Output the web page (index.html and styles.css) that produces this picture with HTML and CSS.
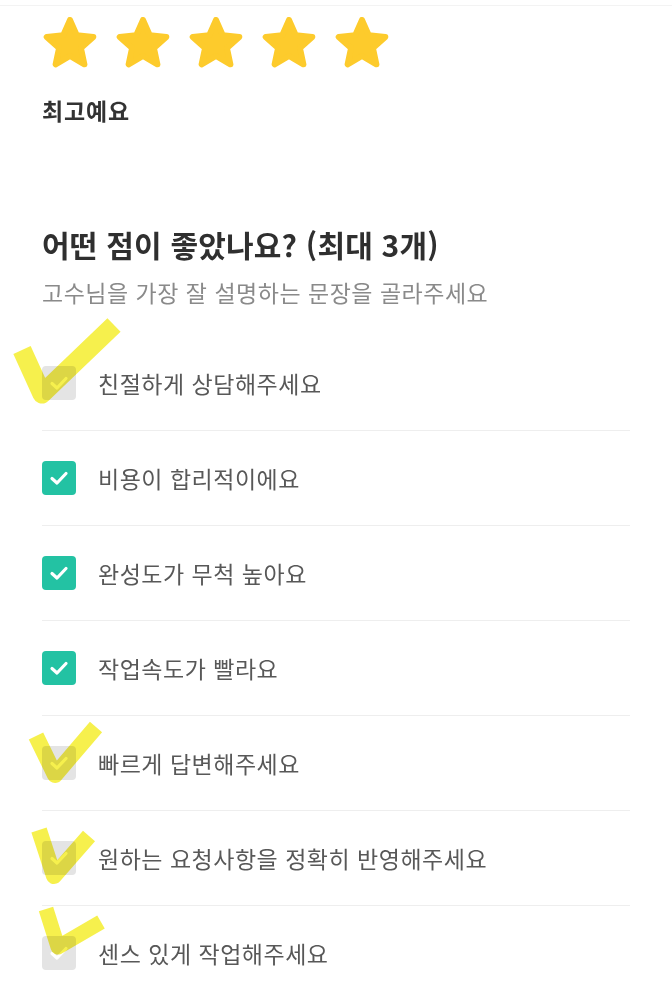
FILE: index.html
```html
<!DOCTYPE html>
<html lang="ko">
<head>
<meta charset="utf-8">
<link rel="stylesheet" href="styles.css">
</head>
<body>
<div class="page">
  <div class="stars">
    <svg class="star" viewBox="0 0 54 51"><path d="M27 3 L33.76 18.2 L50.3 19.93 L37.94 31.05 L41.4 47.32 L27 39 L12.6 47.32 L16.06 31.05 L3.7 19.93 L20.24 18.2 Z"/></svg>
    <svg class="star" viewBox="0 0 54 51"><path d="M27 3 L33.76 18.2 L50.3 19.93 L37.94 31.05 L41.4 47.32 L27 39 L12.6 47.32 L16.06 31.05 L3.7 19.93 L20.24 18.2 Z"/></svg>
    <svg class="star" viewBox="0 0 54 51"><path d="M27 3 L33.76 18.2 L50.3 19.93 L37.94 31.05 L41.4 47.32 L27 39 L12.6 47.32 L16.06 31.05 L3.7 19.93 L20.24 18.2 Z"/></svg>
    <svg class="star" viewBox="0 0 54 51"><path d="M27 3 L33.76 18.2 L50.3 19.93 L37.94 31.05 L41.4 47.32 L27 39 L12.6 47.32 L16.06 31.05 L3.7 19.93 L20.24 18.2 Z"/></svg>
    <svg class="star" viewBox="0 0 54 51"><path d="M27 3 L33.76 18.2 L50.3 19.93 L37.94 31.05 L41.4 47.32 L27 39 L12.6 47.32 L16.06 31.05 L3.7 19.93 L20.24 18.2 Z"/></svg>
  </div>
  <div class="rating-label">최고예요</div>

  <h2 class="title">어떤 점이 좋았나요? (최대 3개)</h2>
  <p class="subtitle">고수님을 가장 잘 설명하는 문장을 골라주세요</p>

  <ul class="options">
    <li class="option"><span class="box"><svg viewBox="0 0 34 34"><path d="M10 17.5 L15 22 L24 12.5"/></svg></span><span class="label">친절하게 상담해주세요</span></li>
    <li class="option"><span class="box on"><svg viewBox="0 0 34 34"><path d="M10 17.5 L15 22 L24 12.5"/></svg></span><span class="label">비용이 합리적이에요</span></li>
    <li class="option"><span class="box on"><svg viewBox="0 0 34 34"><path d="M10 17.5 L15 22 L24 12.5"/></svg></span><span class="label">완성도가 무척 높아요</span></li>
    <li class="option"><span class="box on"><svg viewBox="0 0 34 34"><path d="M10 17.5 L15 22 L24 12.5"/></svg></span><span class="label">작업속도가 빨라요</span></li>
    <li class="option"><span class="box"><svg viewBox="0 0 34 34"><path d="M10 17.5 L15 22 L24 12.5"/></svg></span><span class="label">빠르게 답변해주세요</span></li>
    <li class="option"><span class="box"><svg viewBox="0 0 34 34"><path d="M10 17.5 L15 22 L24 12.5"/></svg></span><span class="label">원하는 요청사항을 정확히 반영해주세요</span></li>
    <li class="option"><span class="box"><svg viewBox="0 0 34 34"><path d="M10 17.5 L15 22 L24 12.5"/></svg></span><span class="label">센스 있게 작업해주세요</span></li>
  </ul>
</div>

<svg class="marks" viewBox="0 0 672 1000" width="672" height="1000">
  <path class="hl hl-big" d="M22 350 L42 394 L114 325"/>
  <path class="hl" d="M36 736 L55 775 L96 727"/>
  <path class="hl" d="M39 830 L54 876 L89 836"/>
  <path class="hl hl-small" d="M46 909 L58 947 L101 922"/>
</svg>
</body>
</html>
```

FILE: styles.css
```css
html, body {
  margin: 0;
  padding: 0;
  background: #ffffff;
}

body {
  font-family: "Noto Sans CJK KR", "Noto Sans", sans-serif;
  color: #333333;
  position: relative;
  width: 672px;
  overflow: hidden;
}

.page {
  border-top: 1px solid #f3f3f3;
  margin-top: 5px;
  padding: 0 42px;
}

.stars {
  display: flex;
  gap: 19px;
  padding-top: 11px;
  padding-left: 1px;
}

.star {
  width: 54px;
  height: 51px;
  display: block;
}

.star path {
  fill: #fdcb2c;
  stroke: #fdcb2c;
  stroke-width: 6;
  stroke-linejoin: round;
}

.rating-label {
  margin-top: 27px;
  font-size: 23px;
  line-height: 30px;
  font-weight: 700;
  color: #333333;
  letter-spacing: 0.8px;
}

.title {
  margin: 99px 0 0;
  font-size: 30px;
  line-height: 40px;
  font-weight: 700;
  color: #2f2f2f;
  letter-spacing: 0.2px;
}

.subtitle {
  margin: 13px 0 0;
  font-size: 23px;
  line-height: 30px;
  color: #8a8a8a;
  font-weight: 400;
  letter-spacing: 0.5px;
}

.options {
  list-style: none;
  margin: 29px 0 0;
  padding: 0;
}

.option {
  display: flex;
  align-items: center;
  gap: 22px;
  height: 94px;
  border-bottom: 1px solid #eeeeee;
}

.box {
  width: 34px;
  height: 34px;
  border-radius: 4px;
  background: #e4e4e4;
  display: flex;
  flex: none;
}

.box svg {
  width: 34px;
  height: 34px;
}

.box path {
  fill: none;
  stroke: #ffffff;
  stroke-width: 3.2;
  stroke-linecap: round;
  stroke-linejoin: round;
}

.box.on {
  background: #23c2a3;
}

.label {
  font-size: 23px;
  line-height: 30px;
  color: #585858;
  letter-spacing: 0.5px;
}

.marks {
  position: absolute;
  left: 0;
  top: 0;
  pointer-events: none;
  mix-blend-mode: multiply;
}

.hl {
  fill: none;
  stroke: #f4ed2e;
  stroke-opacity: 0.85;
  stroke-width: 16;
  stroke-linecap: butt;
  stroke-linejoin: round;
}

.hl-big {
  stroke-width: 19;
}

.hl-small {
  stroke-width: 15;
}
```
